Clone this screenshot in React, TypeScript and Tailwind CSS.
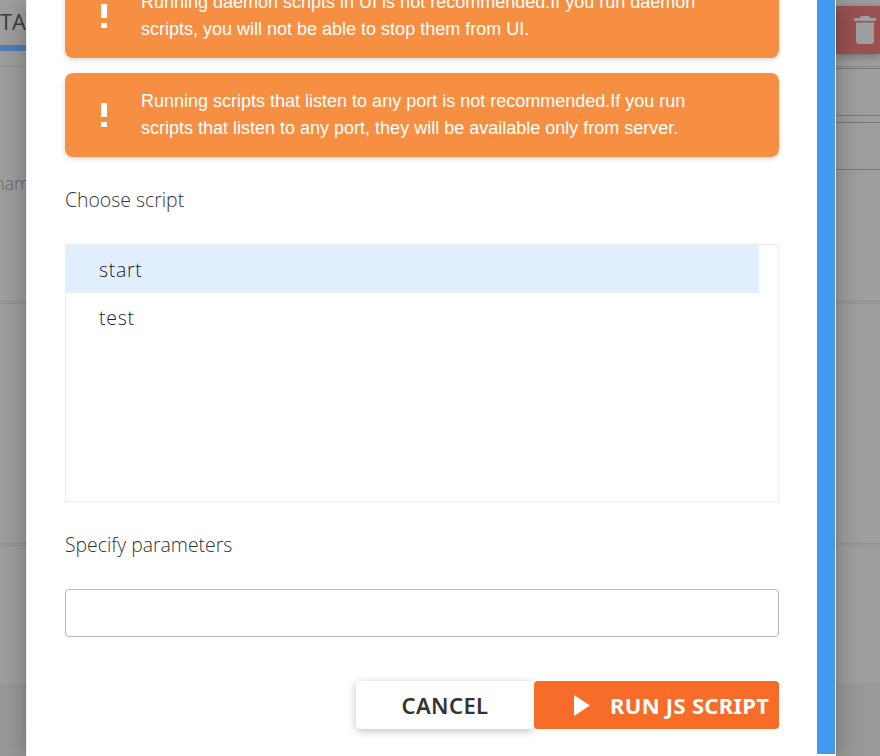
import React from "react";

const warnings = [
  [
    "Running daemon scripts in UI is not recommended.If you run daemon",
    "scripts, you will not be able to stop them from UI.",
  ],
  [
    "Running scripts that listen to any port is not recommended.If you run",
    "scripts that listen to any port, they will be available only from server.",
  ],
];

function Warning({ lines }: { lines: string[] }) {
  return (
    <div className="flex h-[84px] w-full shrink-0 items-center rounded-lg bg-[#f78f42] shadow-[0_2px_5px_rgba(0,0,0,0.15)]">
      <div className="ml-[36px] flex w-[6px] flex-col items-center gap-[5px]">
        <span className="h-[14px] w-[6px] bg-white" />
        <span className="h-[5px] w-[6px] bg-white" />
      </div>
      <p className="ml-[34px] whitespace-nowrap font-['Liberation_Sans',sans-serif] text-[18px] leading-[27px] text-white">
        {lines[0]}
        <br />
        {lines[1]}
      </p>
    </div>
  );
}

function LowerSections() {
  return (
    <>
      <div className="h-[3px] border-y border-[#919191]" />
      <div className="h-[239px]" />
      <div className="h-[3px] border-y border-[#919191]" />
      <div className="h-[137px]" />
      <div className="flex-1 bg-[#999999]" />
    </>
  );
}

export default function App() {
  return (
    <div className="flex h-[756px] w-[880px] overflow-hidden bg-[#9e9e9e] font-['Open_Sans',sans-serif]">
      <div className="flex w-[26px] shrink-0 flex-col overflow-hidden">
        <div className="h-[45px] whitespace-nowrap pt-[3px] text-[22px] leading-[36px] text-[#3c3c3c]">TA</div>
        <div className="h-[6px] bg-[#4d7fb8]" />
        <div className="h-[16px] border-b border-[#8e8e8e]" />
        <div className="-mr-[4px] flex h-[234px] justify-end pt-[103px] text-[18px] font-light leading-[27px] text-[#666666]">
          nam
        </div>
        <LowerSections />
      </div>

      <div
        role="dialog"
        className="relative z-10 flex w-[810px] shrink-0 border-x border-[#ececec] bg-white shadow-[0_4px_24px_rgba(0,0,0,0.3)]"
      >
        <div className="flex flex-1 flex-col pl-[38px] pr-[38px]">
          <div className="-mt-[26px] flex flex-col gap-[15px]">
            {warnings.map((lines) => (
              <Warning key={lines[0]} lines={lines} />
            ))}
          </div>
          <label className="mt-[28px] text-[19.4px] font-light leading-[30px] text-[#333333]">Choose script</label>
          <ul className="mt-[29px] h-[258px] border border-[#ececec] text-[19.5px] font-light tracking-[0.7px] text-[#222222]">
            <li className="-ml-px mr-[19px] h-12 bg-[#e1effd] pl-[34px] leading-[50px]">start</li>
            <li className="-ml-px mr-[19px] h-12 pl-[34px] leading-[50px]">test</li>
          </ul>
          <label className="mt-[28px] text-[19.4px] font-light leading-[30px] text-[#333333]">Specify parameters</label>
          <input
            aria-label="Specify parameters"
            className="mt-[29px] h-12 w-full shrink-0 rounded border border-[#b9b9b9] px-3 outline-none"
          />
          <div className="mt-[44px] flex justify-end font-['Noto_Sans',sans-serif] text-[22px]">
            <button className="h-12 w-[178px] rounded bg-white font-semibold tracking-[0.4px] text-[#333333] shadow-[0_2px_8px_rgba(0,0,0,0.25)]">
              CANCEL
            </button>
            <button className="relative flex h-12 w-[245px] items-center rounded bg-[#f66c28] pl-[40px] font-bold tracking-[0.3px] text-white">
              <svg width="16" height="21" viewBox="0 0 16 21" fill="currentColor">
                <path d="M0 0L16 10.5L0 21Z" />
              </svg>
              <span className="ml-[20px] whitespace-nowrap">RUN JS SCRIPT</span>
            </button>
          </div>
        </div>
        <div className="h-[754px] w-[18px] bg-[#4299f2]" />
      </div>

      <div className="flex w-[44px] shrink-0 flex-col">
        <div className="mt-[6px] flex h-[48px] shrink-0 bg-[#985150] pl-[18px] pt-[10px] shadow-[0_2px_8px_rgba(0,0,0,0.3)]">
          <svg width="22" height="28" viewBox="0 0 22 28" fill="#9e9e9e">
            <path d="M0 2H5.5L7 0H15L16.5 2H22V5H0ZM2 6.5H20V25Q20 28 17 28H5Q2 28 2 25Z" />
          </svg>
        </div>
        <div className="h-[13px] border-b border-[#8e8e8e]" />
        <div className="mt-px h-[48px] border-y border-[#777777]" />
        <div className="mt-[6px] h-[48px] border-y border-[#777777]" />
        <div className="h-[131px]" />
        <LowerSections />
      </div>
    </div>
  );
}
